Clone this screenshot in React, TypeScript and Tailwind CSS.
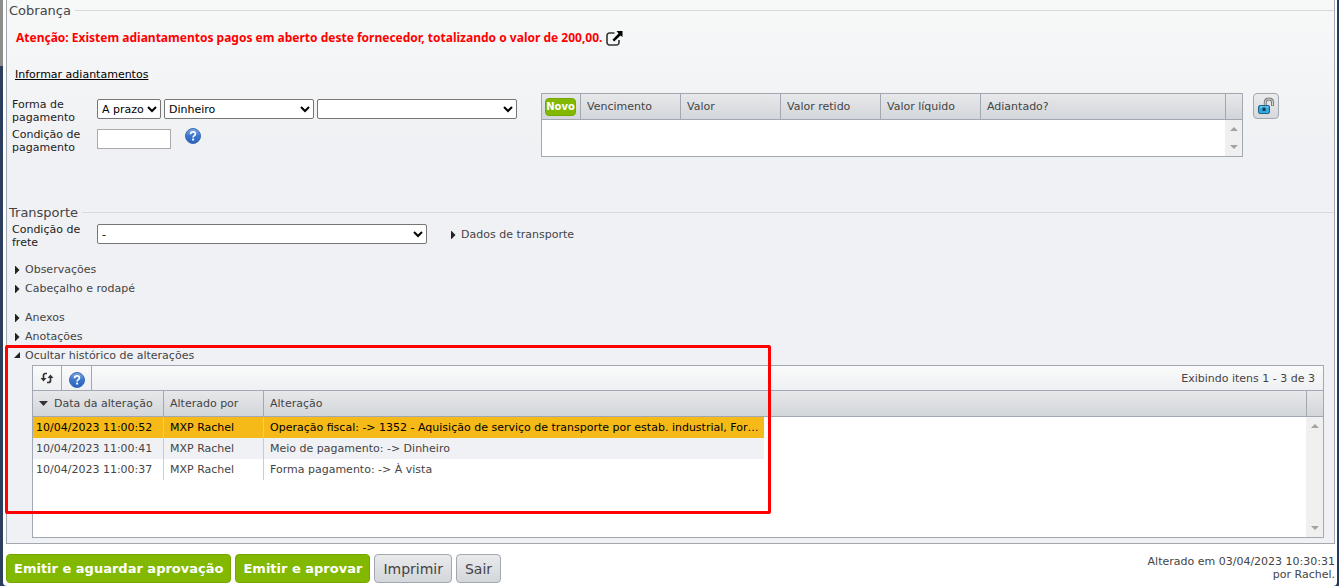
import { useState } from "react";
import type { ReactNode } from "react";

const paymentColumns = [
  { label: "Vencimento", width: "w-[100px]" },
  { label: "Valor", width: "w-[100px]" },
  { label: "Valor retido", width: "w-[100px]" },
  { label: "Valor líquido", width: "w-[100px]" },
  { label: "Adiantado?", width: "" },
];

const history = [
  {
    date: "10/04/2023 11:00:52",
    user: "MXP Rachel",
    change:
      "Operação fiscal: -> 1352 - Aquisição de serviço de transporte por estab. industrial, For…",
  },
  {
    date: "10/04/2023 11:00:41",
    user: "MXP Rachel",
    change: "Meio de pagamento: -> Dinheiro",
  },
  {
    date: "10/04/2023 11:00:37",
    user: "MXP Rachel",
    change: "Forma pagamento: -> À vista",
  },
];

function HelpIcon() {
  return (
    <svg width="16" height="16" viewBox="0 0 16 16" aria-hidden="true">
      <defs>
        <linearGradient id="help" x1="0" y1="0" x2="0" y2="1">
          <stop offset="0" stopColor="#7fabe6" />
          <stop offset="0.5" stopColor="#3b76cc" />
          <stop offset="1" stopColor="#2a62bd" />
        </linearGradient>
      </defs>
      <circle cx="8" cy="8" r="7.5" fill="url(#help)" stroke="#3a6ab4" />
      <path
        d="M5.6 6.2C5.6 4.6 6.7 3.9 8 3.9s2.4.8 2.4 2.1c0 1.7-2.3 1.7-2.3 3.5"
        fill="none"
        stroke="#fff"
        strokeWidth="1.7"
      />
      <rect x="7.1" y="10.6" width="2" height="1.9" fill="#fff" />
    </svg>
  );
}

function ExternalIcon() {
  return (
    <svg width="17" height="15" viewBox="0 0 17 15" aria-hidden="true">
      <path
        d="M8.500 2H3.500A2.500 2.500 0 0 0 1 4.500v7A2.500 2.500 0 0 0 3.500 14h7a2.500 2.500 0 0 0 2.500-2.500V9"
        fill="none"
        stroke="#333"
        strokeWidth="1.600"
      />
      <path d="M10.500 0h6v6L14.500 4.500 8.200 10.500 6.500 8.800 12.500 2.500z" fill="#000" />
    </svg>
  );
}

function LockIcon() {
  return (
    <svg width="18" height="18" viewBox="0 0 18 18" aria-hidden="true">
      <path
        d="M8.300 9V5.200C8.300 3 9.900 2 11.900 2s3.600 1 3.600 3.200V9"
        fill="none"
        stroke="#7d7d7d"
        strokeWidth="3"
      />
      <path
        d="M8.300 9V5.200C8.300 3 9.900 2 11.900 2s3.600 1 3.600 3.200V8.300"
        fill="none"
        stroke="#dcdcdc"
        strokeWidth="1"
      />
      <rect x="1.500" y="8.500" width="11" height="8" rx="1.500" fill="#35a8dc" stroke="#19658f" />
      <path d="M3 10h8" stroke="#8fd6f4" />
      <rect x="5.500" y="10.500" width="3" height="3.500" fill="#123a55" />
    </svg>
  );
}

function RefreshIcon() {
  return (
    <svg width="14" height="12" viewBox="0 0 14 12" aria-hidden="true">
      <path
        d="M7 1.500H5.500Q3.500 1.500 3.500 3.500V7M7 10.500h1.500Q10.500 10.500 10.500 8.500V5"
        fill="none"
        stroke="#333"
        strokeWidth="1.700"
      />
      <path d="M0.500 6h6L3.500 9.500zM7.500 6h6L10.500 2.500z" fill="#333" />
    </svg>
  );
}

function Arrow({ dir }: { dir: "up" | "down" }) {
  return (
    <svg width="8" height="4" viewBox="0 0 8 4" fill="#a3a3a3" aria-hidden="true">
      <path d={dir === "up" ? "M0 4l4-4 4 4z" : "M0 0l4 4 4-4z"} />
    </svg>
  );
}

function Scrollbar() {
  return (
    <div className="flex w-[17px] flex-col">
      <div className="h-[26px] border-b border-l border-[#a1a8b2] bg-linear-to-b from-[#e7e8ea] to-[#d2d5d9]" />
      <div className="flex flex-1 flex-col items-center justify-between bg-[#f0f0f0] py-[7px]">
        <Arrow dir="up" />
        <Arrow dir="down" />
      </div>
    </div>
  );
}

function Legend({ children }: { children: ReactNode }) {
  return (
    <div className="flex h-5 items-center gap-1 pl-0.5">
      <h2 className="pt-0.5 text-[13px] leading-4 text-[#444]">{children}</h2>
      <div className="h-px flex-1 bg-[#d8d9dc]" />
    </div>
  );
}

function Toggle({ open = false, children }: { open?: boolean; children: ReactNode }) {
  return (
    <button
      type="button"
      aria-expanded={open}
      className="flex h-[19px] items-center gap-1 text-[#444]"
    >
      <svg width="8" height="8" viewBox="0 0 8 8" fill="#222" aria-hidden="true">
        <path d={open ? "M7 0v6H1z" : "M2 0h.5L6.500 4l-4 4H2z"} />
      </svg>
      {children}
    </button>
  );
}

export default function App() {
  const [selected, setSelected] = useState(0);

  return (
    <div className="min-h-screen bg-[#263a5c] bg-[linear-gradient(#8d8d8d_66px,#2b3e5e_66px)] bg-[length:3px_100%] bg-no-repeat pr-0.5 pl-[3px] font-['DejaVu_Sans',Verdana,sans-serif] text-[11px] leading-[13px] text-[#222]">
      <div className="min-h-screen rounded-b bg-white pr-0.5 pl-[3px]">
        <main className="border-x border-b border-[#a1a8b2] bg-[#f0f1f4] bg-[linear-gradient(#f7f8f8,#f0f1f4_150px)] pb-[5px]">
          <section>
            <Legend>Cobrança</Legend>
            <p className="flex h-9 items-center gap-1 pl-[9px] font-['Noto_Sans',sans-serif] text-xs font-bold text-[#f00]">
              Atenção: Existem adiantamentos pagos em aberto deste fornecedor, totalizando o valor de
              200,00.
              <a href="#adiantamentos" aria-label="Abrir adiantamentos">
                <ExternalIcon />
              </a>
            </p>
            <div className="flex h-9 items-center pl-2">
              <a href="#informar" className="text-black underline">
                Informar adiantamentos
              </a>
            </div>

            <div className="flex min-h-[110px] items-start pt-px pr-[55px] pl-[5px]">
              <div className="grid w-[529px] shrink-0 grid-cols-[85px_1fr] gap-y-1 pt-[5px]">
                <label htmlFor="forma" className="w-20">
                  Forma de pagamento
                </label>
                <div className="mt-px flex gap-[3px]">
                  <select id="forma" className="h-5 w-16 rounded-xs border border-[#767676] bg-white text-black">
                    <option>A prazo</option>
                    <option>À vista</option>
                  </select>
                  <select aria-label="Meio de pagamento" className="h-5 w-[150px] rounded-xs border border-[#767676] bg-white text-black">
                    <option>Dinheiro</option>
                  </select>
                  <select aria-label="Conta" className="h-5 w-[200px] rounded-xs border border-[#767676] bg-white text-black">
                    <option></option>
                  </select>
                </div>
                <label htmlFor="condicao" className="w-20">
                  Condição de pagamento
                </label>
                <div className="flex items-start gap-[14px]">
                  <input id="condicao" type="text" className="mt-px h-5 w-[74px] border border-[#aaa] bg-white px-1" />
                  <button type="button" aria-label="Ajuda">
                    <HelpIcon />
                  </button>
                </div>
              </div>

              <div className="flex min-w-0 flex-1 border border-[#a1a8b2] bg-white">
                <div className="h-[62px] min-w-0 flex-1">
                  <table className="w-full table-fixed border-separate border-spacing-0 text-left text-[#444]">
                    <thead>
                      <tr className="h-[26px] bg-linear-to-b from-[#e7e8ea] to-[#d2d5d9]">
                        <th className="w-[39px] border-r border-b border-[#a1a8b2] p-0 pl-[3px]">
                          <button
                            type="button"
                            className="block h-[18px] w-[31px] rounded-sm border border-[#74a800] bg-[#82b900] text-[10px] leading-4 font-bold text-white"
                          >
                            Novo
                          </button>
                        </th>
                        {paymentColumns.map((column) => (
                          <th
                            key={column.label}
                            className={`${column.width} border-r border-b border-[#a1a8b2] px-1.5 py-0 font-normal last:border-r-0`}
                          >
                            {column.label}
                          </th>
                        ))}
                      </tr>
                    </thead>
                  </table>
                </div>
                <Scrollbar />
              </div>
              <button
                type="button"
                aria-label="Desbloquear"
                className="ml-2.5 flex size-[26px] items-center justify-center rounded-sm border border-[#a1a8b2] bg-linear-to-b from-[#ebecee] to-[#d6d8dc]"
              >
                <LockIcon />
              </button>
            </div>
          </section>

          <section>
            <Legend>Transporte</Legend>
            <div className="flex items-start pt-px pl-[5px]">
              <label htmlFor="frete" className="w-[85px] pr-2">
                Condição de frete
              </label>
              <select id="frete" className="mt-px h-5 w-[330px] rounded-xs border border-[#767676] bg-white text-black">
                <option>-</option>
              </select>
              <div className="pt-0.5 pl-[22px]">
                <Toggle>Dados de transporte</Toggle>
              </div>
            </div>
          </section>

          <div className="mt-[11px] flex flex-col items-start pl-1.5">
            <Toggle>Observações</Toggle>
            <Toggle>Cabeçalho e rodapé</Toggle>
          </div>
          <div className="mt-2.5 flex flex-col items-start pl-1.5">
            <Toggle>Anexos</Toggle>
            <Toggle>Anotações</Toggle>
          </div>

          <section className="relative">
            <div className="pl-1.5">
              <Toggle open>Ocultar histórico de alterações</Toggle>
            </div>
            <div className="mr-2.5 ml-[25px] border border-[#a1a8b2] bg-white">
              <div className="flex h-[25px] items-stretch border-b border-[#a1a8b2] bg-linear-to-b from-[#f9faf9] to-[#eff0f3]">
                <button
                  type="button"
                  aria-label="Atualizar"
                  className="flex w-[29px] items-center justify-center border-r border-[#a1a8b2]"
                >
                  <RefreshIcon />
                </button>
                <button
                  type="button"
                  aria-label="Ajuda"
                  className="flex w-[30px] items-center justify-center border-r border-[#a1a8b2] pt-1"
                >
                  <HelpIcon />
                </button>
                <p className="ml-auto self-center pr-2 text-[#444]">Exibindo itens 1 - 3 de 3</p>
              </div>
              <div className="flex h-[146px]">
                <div className="min-w-0 flex-1">
                  <table className="w-full table-fixed border-separate border-spacing-0 text-left text-[#444]">
                    <colgroup>
                      <col className="w-[131px]" />
                      <col className="w-[100px]" />
                      <col className="w-[500px]" />
                      <col />
                    </colgroup>
                    <thead>
                      <tr className="h-[26px] bg-linear-to-b from-[#e7e8ea] to-[#d2d5d9]">
                        <th aria-sort="descending" className="border-r border-b border-[#a1a8b2] px-1.5 py-0 font-normal">
                          <span className="flex items-center gap-1.5">
                            <svg width="9" height="5" viewBox="0 0 9 5" fill="#333" aria-hidden="true">
                              <path d="M0 0h9L4.500 5z" />
                            </svg>
                            Data da alteração
                          </span>
                        </th>
                        <th className="border-r border-b border-[#a1a8b2] px-1.5 py-0 font-normal">Alterado por</th>
                        <th colSpan={2} className="border-b border-[#a1a8b2] px-1.5 py-0 font-normal">
                          Alteração
                        </th>
                      </tr>
                    </thead>
                    <tbody>
                      {history.map((row, index) => {
                        const color =
                          index === selected
                            ? "bg-[#f5b918] text-black"
                            : index % 2 === 1
                              ? "bg-[#f0f1f4]"
                              : "";
                        return (
                          <tr key={row.date} className="h-[21px]" onClick={() => setSelected(index)}>
                            <td className={`${color} border-r border-[#ccc] p-0 pl-[3px] whitespace-nowrap`}>
                              {row.date}
                            </td>
                            <td className={`${color} border-r border-[#ccc] px-1.5 py-0`}>{row.user}</td>
                            <td className={`${color} py-0 pl-1.5 whitespace-nowrap`}>{row.change}</td>
                          </tr>
                        );
                      })}
                    </tbody>
                  </table>
                </div>
                <Scrollbar />
              </div>
            </div>
            {/* Marcação do histórico */}
            <div className="pointer-events-none absolute -top-px -left-0.5 h-[169px] w-[766px] rounded-xs border-3 border-[#f00]" />
          </section>
        </main>

        <footer className="flex items-start justify-between pt-2.5">
          <div className="flex gap-1 text-[13px]">
            <button
              type="button"
              className="h-[29px] rounded-sm border border-[#74a800] bg-[#82b900] px-[7px] font-bold text-white"
            >
              Emitir e aguardar aprovação
            </button>
            <button
              type="button"
              className="h-[29px] rounded-sm border border-[#74a800] bg-[#82b900] px-[7px] font-bold text-white"
            >
              Emitir e aprovar
            </button>
            <button
              type="button"
              className="h-[29px] rounded-sm border border-[#a1a8b2] bg-linear-to-b from-[#e9eaec] to-[#d3d6da] px-2 text-sm text-[#444]"
            >
              Imprimir
            </button>
            <button
              type="button"
              className="h-[29px] rounded-sm border border-[#a1a8b2] bg-linear-to-b from-[#e9eaec] to-[#d3d6da] px-2 text-sm text-[#444]"
            >
              Sair
            </button>
          </div>
          <p className="w-[200px] pt-px text-right text-[#444]">
            Alterado em 03/04/2023 10:30:31
            <br />
            por Rachel.
          </p>
        </footer>
      </div>
    </div>
  );
}
